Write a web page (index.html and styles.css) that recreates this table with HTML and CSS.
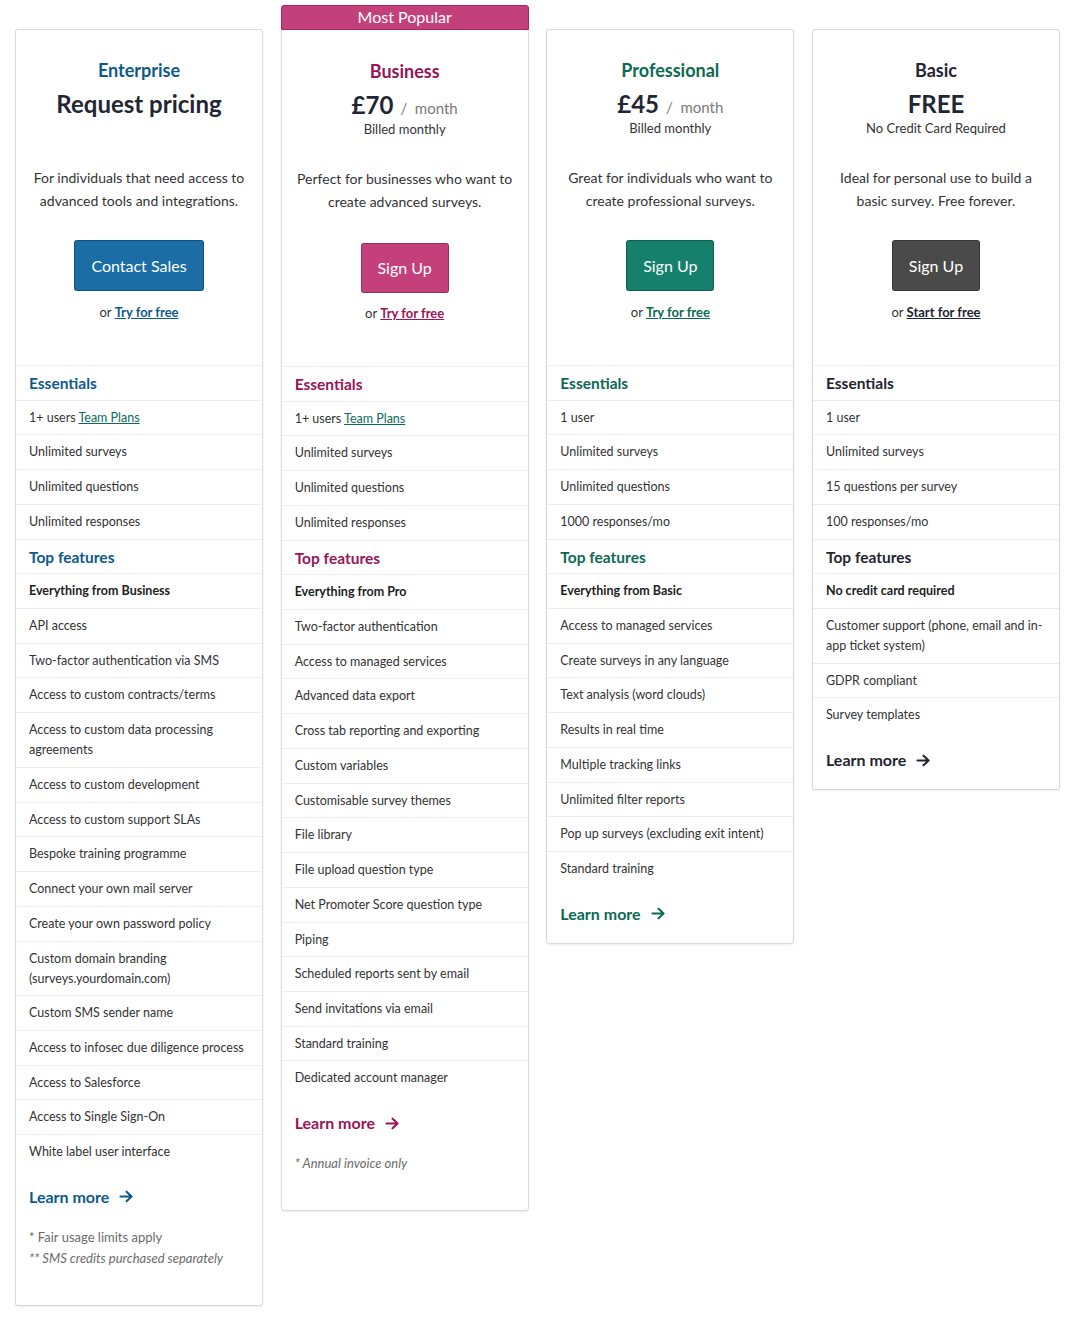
FILE: index.html
```html
<!DOCTYPE html>
<html lang="en">
<head>
<meta charset="utf-8">
<title>Pricing plans</title>
<link rel="stylesheet" href="styles.css">
</head>
<body>
<div class="plans">

  <div class="plan plan-enterprise">
    <div class="plan-head">
      <h2 class="plan-name">Enterprise</h2>
      <div class="plan-price"><span class="amount">Request pricing</span></div>
      <div class="plan-billing">&nbsp;</div>
      <p class="plan-desc">For individuals that need access to advanced tools and integrations.</p>
      <a class="btn" href="#">Contact Sales</a>
      <p class="plan-alt">or <a href="#">Try for free</a></p>
    </div>
    <ul class="features">
      <li class="features-heading">Essentials</li>
      <li>1+ users <a class="team-link" href="#">Team Plans</a></li>
      <li>Unlimited surveys</li>
      <li>Unlimited questions</li>
      <li>Unlimited responses</li>
      <li class="features-heading">Top features</li>
      <li class="strong">Everything from Business</li>
      <li>API access</li>
      <li>Two-factor authentication via SMS</li>
      <li>Access to custom contracts/terms</li>
      <li>Access to custom data processing agreements</li>
      <li>Access to custom development</li>
      <li>Access to custom support SLAs</li>
      <li>Bespoke training programme</li>
      <li>Connect your own mail server</li>
      <li>Create your own password policy</li>
      <li>Custom domain branding (surveys.yourdomain.com)</li>
      <li>Custom SMS sender name</li>
      <li>Access to infosec due diligence process</li>
      <li>Access to Salesforce</li>
      <li>Access to Single Sign-On</li>
      <li>White label user interface</li>
    </ul>
    <a class="learn-more" href="#">Learn more <svg class="arrow" viewBox="0 0 16 14" width="15" height="13"><path d="M1.5 7h12M8 1.8L13.5 7 8 12.2" fill="none" stroke="currentColor" stroke-width="2.2" stroke-linecap="round" stroke-linejoin="round"/></svg></a>
    <div class="notes">
      <p>* Fair usage limits apply</p>
      <p class="italic">** SMS credits purchased separately</p>
    </div>
  </div>

  <div class="plan plan-business">
    <div class="badge">Most Popular</div>
    <div class="plan-head">
      <h2 class="plan-name">Business</h2>
      <div class="plan-price"><span class="amount">£70</span><span class="per">/ &nbsp;month</span></div>
      <div class="plan-billing">Billed monthly</div>
      <p class="plan-desc">Perfect for businesses who want to create advanced surveys.</p>
      <a class="btn" href="#">Sign Up</a>
      <p class="plan-alt">or <a href="#">Try for free</a></p>
    </div>
    <ul class="features">
      <li class="features-heading">Essentials</li>
      <li>1+ users <a class="team-link" href="#">Team Plans</a></li>
      <li>Unlimited surveys</li>
      <li>Unlimited questions</li>
      <li>Unlimited responses</li>
      <li class="features-heading">Top features</li>
      <li class="strong">Everything from Pro</li>
      <li>Two-factor authentication</li>
      <li>Access to managed services</li>
      <li>Advanced data export</li>
      <li>Cross tab reporting and exporting</li>
      <li>Custom variables</li>
      <li>Customisable survey themes</li>
      <li>File library</li>
      <li>File upload question type</li>
      <li>Net Promoter Score question type</li>
      <li>Piping</li>
      <li>Scheduled reports sent by email</li>
      <li>Send invitations via email</li>
      <li>Standard training</li>
      <li>Dedicated account manager</li>
    </ul>
    <a class="learn-more" href="#">Learn more <svg class="arrow" viewBox="0 0 16 14" width="15" height="13"><path d="M1.5 7h12M8 1.8L13.5 7 8 12.2" fill="none" stroke="currentColor" stroke-width="2.2" stroke-linecap="round" stroke-linejoin="round"/></svg></a>
    <div class="notes">
      <p class="italic">* Annual invoice only</p>
    </div>
  </div>

  <div class="plan plan-professional">
    <div class="plan-head">
      <h2 class="plan-name">Professional</h2>
      <div class="plan-price"><span class="amount">£45</span><span class="per">/ &nbsp;month</span></div>
      <div class="plan-billing">Billed monthly</div>
      <p class="plan-desc">Great for individuals who want to create professional surveys.</p>
      <a class="btn" href="#">Sign Up</a>
      <p class="plan-alt">or <a href="#">Try for free</a></p>
    </div>
    <ul class="features">
      <li class="features-heading">Essentials</li>
      <li>1 user</li>
      <li>Unlimited surveys</li>
      <li>Unlimited questions</li>
      <li>1000 responses/mo</li>
      <li class="features-heading">Top features</li>
      <li class="strong">Everything from Basic</li>
      <li>Access to managed services</li>
      <li>Create surveys in any language</li>
      <li>Text analysis (word clouds)</li>
      <li>Results in real time</li>
      <li>Multiple tracking links</li>
      <li>Unlimited filter reports</li>
      <li>Pop up surveys (excluding exit intent)</li>
      <li>Standard training</li>
    </ul>
    <a class="learn-more" href="#">Learn more <svg class="arrow" viewBox="0 0 16 14" width="15" height="13"><path d="M1.5 7h12M8 1.8L13.5 7 8 12.2" fill="none" stroke="currentColor" stroke-width="2.2" stroke-linecap="round" stroke-linejoin="round"/></svg></a>
  </div>

  <div class="plan plan-basic">
    <div class="plan-head">
      <h2 class="plan-name">Basic</h2>
      <div class="plan-price"><span class="amount">FREE</span></div>
      <div class="plan-billing">No Credit Card Required</div>
      <p class="plan-desc">Ideal for personal use to build a basic survey. Free forever.</p>
      <a class="btn" href="#">Sign Up</a>
      <p class="plan-alt">or <a href="#">Start for free</a></p>
    </div>
    <ul class="features">
      <li class="features-heading">Essentials</li>
      <li>1 user</li>
      <li>Unlimited surveys</li>
      <li>15 questions per survey</li>
      <li>100 responses/mo</li>
      <li class="features-heading">Top features</li>
      <li class="strong">No credit card required</li>
      <li>Customer support (phone, email and in-app ticket system)</li>
      <li>GDPR compliant</li>
      <li>Survey templates</li>
    </ul>
    <a class="learn-more" href="#">Learn more <svg class="arrow" viewBox="0 0 16 14" width="15" height="13"><path d="M1.5 7h12M8 1.8L13.5 7 8 12.2" fill="none" stroke="currentColor" stroke-width="2.2" stroke-linecap="round" stroke-linejoin="round"/></svg></a>
  </div>

</div>
</body>
</html>
```

FILE: styles.css
```css
* { box-sizing: border-box; }

body {
  margin: 0;
  background: #fff;
  font-family: Lato, "Liberation Sans", sans-serif;
  color: #2b2f36;
}

.plans {
  display: grid;
  grid-template-columns: repeat(4, 248px);
  column-gap: 17.67px;
  align-items: start;
  padding: 29px 10px 15px 15px;
}

.plan {
  position: relative;
  border: 1px solid #d9d9d9;
  border-radius: 3px;
  box-shadow: 0 1px 2px rgba(0,0,0,0.08);
  background: #fff;
  padding-bottom: 18px;
}

.badge {
  position: absolute;
  left: -1px;
  right: -1px;
  top: -25px;
  height: 25px;
  background: #c4407a;
  border: 1px solid #a72660;
  border-radius: 3px 3px 0 0;
  color: #fff;
  font-size: 16px;
  line-height: 22px;
  text-align: center;
}

.plan-head {
  text-align: center;
  padding: 27px 14px 0;
  height: 335px;
}

.plan-name {
  margin: 0;
  font-size: 18px;
  line-height: 26px;
  font-weight: 700;
}

.plan-price {
  margin-top: 6px;
  font-size: 24px;
  height: 30px;
  line-height: 30px;
}

.amount {
  font-size: 24px;
  font-weight: 700;
  color: #1f2733;
}

.per {
  font-size: 15px;
  color: #7a7a7a;
  margin-left: 7px;
}

.plan-billing {
  font-size: 13px;
  line-height: 18px;
  color: #333;
}

.plan-desc {
  margin: 29px 0 0;
  font-size: 14px;
  line-height: 23px;
  color: #333;
}

.btn {
  display: inline-block;
  margin-top: 28px;
  height: 51px;
  line-height: 49px;
  padding: 0 16px;
  border: 1px solid rgba(0,0,0,0.25);
  border-radius: 3px;
  color: #fff;
  font-size: 16px;
  text-decoration: none;
}

.plan-alt {
  margin: 11px 0 0;
  font-size: 13px;
  line-height: 20px;
  color: #333;
}

.plan-alt a {
  font-weight: 700;
  text-decoration: underline;
}

.features {
  list-style: none;
  margin: 0;
  padding: 0;
}

.features li {
  border-top: 1px solid #eeeeee;
  padding: 7px 13px 6.72px;
  font-size: 12.5px;
  line-height: 20px;
  color: #333;
}

.features li.features-heading {
  font-size: 15.5px;
  font-weight: 700;
}

.features li.strong {
  font-weight: 700;
  color: #222;
}

.team-link {
  color: #0b6b5a;
  text-decoration: underline;
}

.learn-more {
  display: inline-flex;
  align-items: center;
  gap: 10px;
  margin: 17px 13px 0;
  font-size: 16px;
  line-height: 22px;
  font-weight: 700;
  text-decoration: none;
}

.arrow { display: block; }

.notes {
  margin: 19px 13px 0;
  padding-bottom: 18px;
  font-size: 13px;
  line-height: 21px;
  color: #6b6b6b;
}

.notes p { margin: 0; }
.notes .italic { font-style: italic; }

/* Plan colour themes */
.plan-enterprise .plan-name,
.plan-enterprise .features-heading,
.plan-enterprise .learn-more,
.plan-enterprise .plan-alt a { color: #0d5a8c; }
.plan-enterprise .btn { background: #1a6ea5; }

.plan-business .plan-name,
.plan-business .features-heading,
.plan-business .learn-more,
.plan-business .plan-alt a { color: #9b1456; }
.plan-business .btn { background: #c4407a; margin-top: 30px; height: 50px; line-height: 48px; }
.plan-business .plan-alt { margin-top: 10px; }
.plan-business .plan-head { padding-top: 28px; height: 336px; }

.plan-professional .plan-name,
.plan-professional .features-heading,
.plan-professional .learn-more,
.plan-professional .plan-alt a { color: #0b6a52; }
.plan-professional .btn { background: #15806b; }

.plan-basic .plan-name,
.plan-basic .features-heading,
.plan-basic .learn-more,
.plan-basic .plan-alt a { color: #1f2530; }
.plan-basic .btn { background: #4a4a4a; }
```
